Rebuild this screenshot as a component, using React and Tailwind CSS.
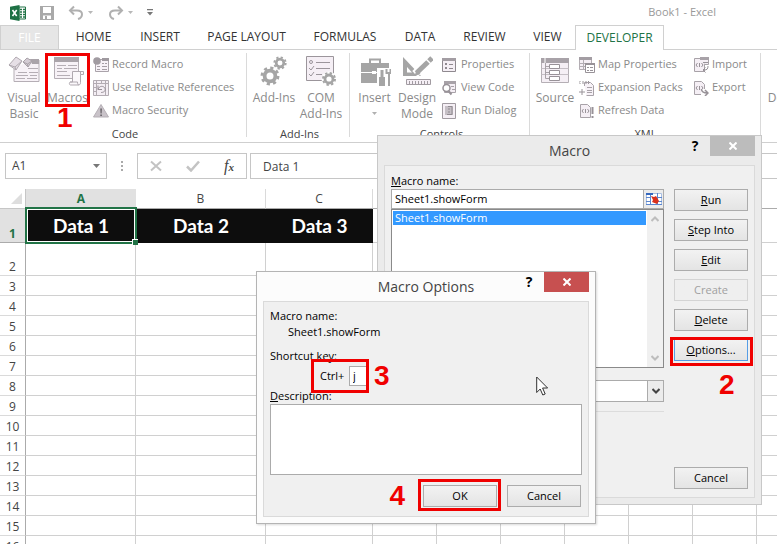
import React from 'react';

/* ---------- icons ---------- */

const ExcelLogo = () => (
  <svg className="h-4 w-4" viewBox="0 0 16 16">
    <path d="M9 2h6.500v12H9z" fill="#fff" stroke="#217346" />
    <path d="M10 4.500h2M13 4.500h2M10 7h2M13 7h2M10 9.500h2M13 9.500h2M10 12h2M13 12h2" stroke="#217346" strokeWidth="1.300" />
    <path d="M0 1.800L9.500 0v16L0 14.200z" fill="#1e7145" />
    <path d="M2.500 5l4.200 6M6.700 5l-4.200 6" stroke="#fff" strokeWidth="1.600" />
  </svg>
);

const SaveIcon = () => (
  <svg className="h-4 w-4" viewBox="0 0 16 16" fill="none">
    <path d="M1 1h14v14H1z" fill="#a9a9a9" />
    <path d="M4 2h8v6H4z" fill="#fff" />
    <path d="M4 10.500h8v3.500H4z" fill="#fff" />
    <path d="M6 11h2v3H6z" fill="#a9a9a9" />
  </svg>
);

const UndoIcon = ({ flip }) => (
  <svg className={flip ? 'h-4 w-4 -scale-x-100' : 'h-4 w-4'} viewBox="0 0 16 16" fill="none" stroke="#b0b0b0" strokeWidth="2">
    <path d="M6 1.500L2 5.500l4 4" />
    <path d="M2.500 5.500H9c7 0 6 7 1 8.500" />
  </svg>
);

const Caret = ({ className = '' }) => (
  <svg className={`h-[3px] w-[5px] ${className}`} viewBox="0 0 5 3" fill="currentColor">
    <path d="M0 0h5L2.500 3z" />
  </svg>
);

const VisualBasicIcon = () => (
  <svg className="h-8 w-8" viewBox="0 0 32 32" fill="none">
    <path d="M6 14v12.500h25V5H22" fill="#f7f2f7" stroke="#b5aeb5" />
    <path d="M22 4h9v5h-7z" fill="#aaa4aa" />
    <path d="M20 13.500h10M10 17.500h9M21 17.500h9M8 20.500h12M22 20.500h7M8 23.500h9M19 23.500h10" stroke="#b5aeb5" />
    <path d="M1 10l7-8 6 4-6 9z" fill="#e6dfe6" stroke="#b0a9b0" />
    <path d="M1 10l6 2 7-6M7 12l1 3" stroke="#b0a9b0" />
    <path d="M15 7l4-4 5 3-4 6z" fill="#d4ccd4" stroke="#a9a2a9" />
    <path d="M15 7l4.500 2L24 6M19.500 9l.5 3" stroke="#a9a2a9" />
  </svg>
);

const MacrosIcon = () => (
  <svg className="h-8 w-8" viewBox="0 0 32 32" fill="none">
    <path d="M2.500 3.500h24v20h-24z" fill="#f7f2f7" stroke="#b5aeb5" />
    <path d="M2 2h25v5H2z" fill="#aaa4aa" />
    <path d="M5 10.500h9M16 10.500h9M5 13.500h5M12 13.500h13M5 16.500h10M5 20.500h13" stroke="#b5aeb5" />
    <path d="M20.500 16.500h11v3h-3v8c0 2-1 2.500-2.500 2.500h-7.500c-1.500 0-1.500-3 0-3h2z" fill="#fbf8fb" stroke="#b0a9b0" />
    <path d="M18 27h7.500c0 2 .5 3 1.500 3M28.500 19.500v-3" stroke="#b0a9b0" />
  </svg>
);

const RecordIcon = () => (
  <svg className="h-4 w-4" viewBox="0 0 16 16" fill="none">
    <path d="M2.500 2.500h13v12h-13z" fill="#f7f2f7" stroke="#aaa3aa" />
    <path d="M9 1h7v3H9z" fill="#9f999f" />
    <path d="M9 6.500h2M12 6.500h2M4 9.500h3M9 9.500h5M4 12.500h3M9 12.500h5" stroke="#a59ea5" />
    <circle cx="4" cy="4" r="3.800" fill="#a19ba1" />
  </svg>
);

const RelativeIcon = () => (
  <svg className="h-4 w-4" viewBox="0 0 16 16" fill="none">
    <path d="M.5.5h15v15H.5zM.5 3.500h15M3.500.5v15M8.500.5v3M12.500.5v3M.5 7.500h3M.5 11.500h3M12.500 3.500v12" fill="#f4eef4" stroke="#b3acb3" />
    <path d="M5 5.500v4h4M5 9.500c1-4 6-4 7-1s-2 4-4 4" stroke="#978f97" />
  </svg>
);

const SecurityIcon = () => (
  <svg className="h-4 w-4" viewBox="0 0 16 16">
    <path d="M8 1.500L15.500 14H.5z" fill="#c9c3c9" stroke="#b5afb5" strokeLinejoin="round" />
    <path d="M7.200 5.500h1.800l-.3 5H7.500zM7.200 11.500H9V13H7.200z" fill="#6f6a6f" />
  </svg>
);

const Gear = ({ cx, cy, r }) => (
  <g fill="none" stroke="#a5a5a5">
    <circle cx={cx} cy={cy} r={r} strokeWidth={r * 0.7} fill="#fff" />
    <circle cx={cx} cy={cy} r={r * 1.5} strokeWidth={r * 0.5} strokeDasharray={`${r * 0.589} ${r * 0.589}`} />
  </g>
);

const GearsIcon = () => (
  <svg className="h-8 w-8" viewBox="0 0 32 32">
    <Gear cx={12} cy={21} r={5.4} />
    <Gear cx={22} cy={8} r={3.8} />
  </svg>
);

const ComIcon = () => (
  <svg className="h-8 w-8" viewBox="0 0 32 32" fill="none">
    <path d="M1.500 1.500h27v24h-27z" fill="#f5eff5" stroke="#9b959b" />
    <circle cx="6" cy="7" r="1.500" stroke="#9b959b" />
    <path d="M4 13l2 2 3-4M4 19l2 2 3-4M11 7.500h14M11 13.500h14M11 19.500h6" stroke="#9b959b" />
    <circle cx="24" cy="24" r="7.500" fill="#fff" />
    <Gear cx={24} cy={24} r={4} />
  </svg>
);

const ToolboxIcon = () => (
  <svg className="h-8 w-8" viewBox="0 0 32 32" fill="none">
    <path d="M11 8V4.500h10V8" stroke="#a5a5a5" strokeWidth="2" />
    <path d="M2 8h28v20H2z" fill="#a5a5a5" />
    <path d="M2 17.500h11M17 17.500h13" stroke="#fff" />
    <path d="M13 16h4v3h-4z" fill="#fff" />
    <path d="M18 13h14v19H18z" fill="#fff" />
    <path d="M20 22h6v9h-6zM21.500 15h3v7h-3z" fill="#a5a5a5" />
    <path d="M30 19v12M27.500 14v4h4v-4" stroke="#a5a5a5" strokeWidth="2" />
  </svg>
);

const DesignIcon = () => (
  <svg className="h-8 w-8" viewBox="0 0 32 32" fill="none">
    <path d="M2 2l18 19H2z" fill="#a5a5a5" />
    <path d="M6 12l5 5.500H6z" fill="#fff" />
    <path d="M31 3L14 19" stroke="#fff" strokeWidth="8" />
    <path d="M27 7L15.500 18" stroke="#a5a5a5" strokeWidth="5" />
    <path d="M31 3l-3 3" stroke="#a5a5a5" strokeWidth="5" />
    <path d="M15.500 15l4 4-6 2z" fill="#a5a5a5" />
    <path d="M5.500 24.500h24v5h-24z" fill="#f5eff5" stroke="#a19ba1" />
    <path d="M8.500 26v3M11.500 26v3M14.500 26v3M17.500 26v3M20.500 26v3M23.500 26v3M26.500 26v3" stroke="#a19ba1" />
  </svg>
);

const PropertiesIcon = () => (
  <svg className="h-4 w-4" viewBox="0 0 16 16" fill="none">
    <path d="M.5 1.500h13v13H.5z" fill="#f5eff5" stroke="#8f898f" />
    <path d="M0 1h14v3H0z" fill="#a39da3" />
    <path d="M3 6h2v2H3zM3 10h2v2H3z" fill="#8f898f" />
    <path d="M7 7.500h4M7 11.500h4" stroke="#8f898f" />
  </svg>
);

const ViewCodeIcon = () => (
  <svg className="h-4 w-4" viewBox="0 0 16 16" fill="none">
    <path d="M2.500 1.500h11v11h-11z" fill="#f5eff5" stroke="#a8a2a8" />
    <path d="M2 1h12v3H2z" fill="#a8a2a8" />
    <path d="M9 6.500h3M10 9.500h3" stroke="#a8a2a8" />
    <circle cx="4.500" cy="8" r="3.500" fill="#fff" stroke="#989298" strokeWidth="1.500" />
    <path d="M6.500 11l3 3.500" stroke="#989298" strokeWidth="2" />
  </svg>
);

const RunDialogIcon = () => (
  <svg className="h-4 w-4" viewBox="0 0 16 16" fill="none">
    <path d="M.5.5h13v15H.5z" fill="#f5eff5" stroke="#a19ba1" />
    <path d="M3 3h8v9H3z" fill="#c5bfc5" />
    <path d="M6 3.500h4v8H5M6 6h2M6 9h2" stroke="#918b91" />
  </svg>
);

const SourceIcon = () => (
  <svg className="h-8 w-8" viewBox="0 0 32 32" fill="none">
    <path d="M2.500 4.500h27v23h-27z" fill="#f5eff5" stroke="#b5afb5" />
    <path d="M2 3h28v5H2z" fill="#a8a2a8" />
    <path d="M6 3v5" stroke="#fff" />
    <path d="M2.500 13.500h27M2.500 19.500h27" stroke="#c5bfc5" />
    <path d="M6.500 8v15.500h4M6.500 11.500h4M6.500 17.500h4" stroke="#a8a2a8" />
    <path d="M10.500 9.500h10v4h-10zM10.500 15.500h10v4h-10zM10.500 21.500h10v4h-10z" fill="#fff" stroke="#989298" />
  </svg>
);

const MapIcon = () => (
  <svg className="h-4 w-4" viewBox="0 0 16 16" fill="none">
    <path d="M.5.5h12v12H.5zM4.500 3v10M.5 6.500h12M.5 9.500h12" fill="#f5eff5" stroke="#b3adb3" />
    <path d="M0 0h13v3H0z" fill="#a39da3" />
    <path d="M6.500 6.500h9v9h-9z" fill="#fff" stroke="#989298" />
    <path d="M6 6h10v2H6z" fill="#989298" />
    <path d="M8 10.500h2M11 10.500h3M8 13.500h2M11 13.500h3" stroke="#989298" />
  </svg>
);

const ExpansionIcon = () => (
  <svg className="h-4 w-4" viewBox="0 0 16 16" fill="none">
    <path d="M5.500 6V2.500h6l3 3v10h-7" fill="#f7f2f7" stroke="#a8a2a8" />
    <path d="M8 7.500h5M8 10.500h5M8 12.500h5" stroke="#a8a2a8" />
    <path d="M1.500 1L0 2.500 1.500 4M4 1v3M7 1v3M9 1l1.500 1.500L9 4M3 9v6M0 12h6" stroke="#989298" />
  </svg>
);

const XmlDoc = ({ children }) => (
  <svg className="h-4 w-4" viewBox="0 0 16 16" fill="none">
    <path d="M1.500 1.500h7l3 3v10h-10z" fill="#f5eff5" stroke="#a8a2a8" />
    <path d="M4.500 6L3 8l1.500 2M8.500 6L10 8l-1.500 2M6.500 6v4" stroke="#989298" />
    {children}
  </svg>
);

const RefreshDataIcon = () => (
  <XmlDoc>
    <path d="M13.500 4v7M13.500 13v2" stroke="#989298" strokeWidth="2" />
  </XmlDoc>
);

const ImportIcon = () => (
  <XmlDoc>
    <path d="M7 .5h8.500v7H12" fill="#f5eff5" stroke="#a8a2a8" />
    <path d="M7 0h9v3H7z" fill="#a8a2a8" />
    <path d="M10 5.500h5M15 9c0 3-1 4-4 4M12.500 10.500L10 13l2.500 2.500" stroke="#989298" />
  </XmlDoc>
);

const ExportIcon = () => (
  <XmlDoc>
    <path d="M8 9h8v7H8z" fill="#fff" />
    <path d="M8.500 9c0 3 2 4 6 4M12 10l3 3-3 3" stroke="#989298" strokeWidth="1.500" />
  </XmlDoc>
);

const DocumentPanelIcon = () => (
  <svg className="h-8 w-8" viewBox="0 0 32 32" fill="none">
    <path d="M10.500 3.500h18v24h-18z" fill="#f5eff5" stroke="#a8a2a8" />
    <path d="M13 8.500h13M13 12.500h13M13 16.500h13" stroke="#a8a2a8" />
  </svg>
);

/* ---------- ribbon ---------- */

const tabs = [
  { name: 'HOME', width: 'w-[67px]' },
  { name: 'INSERT', width: 'w-[66px]' },
  { name: 'PAGE LAYOUT', width: 'w-[107px]' },
  { name: 'FORMULAS', width: 'w-[90px]' },
  { name: 'DATA', width: 'w-[60px]' },
  { name: 'REVIEW', width: 'w-[69px]' },
  { name: 'VIEW', width: 'w-[57px]' },
];

const Step = ({ className, children }) => (
  <span className={`pointer-events-none font-['Liberation_Sans',sans-serif] text-[28px] leading-6 font-bold text-[#f00000] ${className}`}>
    {children}
  </span>
);

const BigButton = ({ icon, label, width, caret }) => (
  <button className={`flex shrink-0 flex-col items-center text-[12px] leading-4 ${width}`}>
    <span className="h-[37px] pt-0.5">{icon}</span>
    <span className="whitespace-pre-line">{label}</span>
    {caret && <Caret className="mt-1.5 text-[#b0b0b0]" />}
  </button>
);

const SmallButton = ({ icon, label }) => (
  <button className="flex h-[23px] items-center gap-[3px] whitespace-nowrap">
    {icon}
    {label}
  </button>
);

const Group = ({ title, width, children }) => (
  <section className={`relative flex shrink-0 flex-col ${width}`}>
    <div className="flex h-[74px] items-start">{children}</div>
    <h2 className="text-center leading-4 text-[#444]">{title}</h2>
  </section>
);

const Divider = () => <div className="h-[84px] w-px shrink-0 bg-[#dadada]" />;

const Ribbon = () => (
  <div className="flex h-[93px] overflow-hidden border-b border-[#cfcfcf] pt-[3px] text-[11px] text-[#8a8a8a]">
    <Group title="Code" width="w-[246px] pl-1">
      <BigButton icon={<VisualBasicIcon />} label={'Visual\nBasic'} width="w-10" />
      <div className="relative ml-px">
        <BigButton icon={<MacrosIcon />} label="Macros" width="w-[45px]" />
        <div className="pointer-events-none absolute -bottom-px inset-x-0 top-0 border-3 border-[#f00000]" />
        <Step className="absolute top-full left-3">1</Step>
      </div>
      <div className="ml-[3px]">
        <SmallButton icon={<RecordIcon />} label="Record Macro" />
        <SmallButton icon={<RelativeIcon />} label="Use Relative References" />
        <SmallButton icon={<SecurityIcon />} label="Macro Security" />
      </div>
    </Group>
    <Divider />
    <Group title="Add-Ins" width="w-[102px] pl-[3px]">
      <BigButton icon={<GearsIcon />} label="Add-Ins" width="w-12" />
      <BigButton icon={<ComIcon />} label={'COM\nAdd-Ins'} width="w-[46px]" />
    </Group>
    <Divider />
    <Group title="Controls" width="w-[179px] pl-1">
      <BigButton icon={<ToolboxIcon />} label="Insert" width="w-[41px]" caret />
      <BigButton icon={<DesignIcon />} label={'Design\nMode'} width="w-11" />
      <div className="ml-[3px]">
        <SmallButton icon={<PropertiesIcon />} label="Properties" />
        <SmallButton icon={<ViewCodeIcon />} label="View Code" />
        <SmallButton icon={<RunDialogIcon />} label="Run Dialog" />
      </div>
    </Group>
    <Divider />
    <Group title="XML" width="w-[230px] pl-px">
      <BigButton icon={<SourceIcon />} label="Source" width="w-12" />
      <div className="w-[114px]">
        <SmallButton icon={<MapIcon />} label="Map Properties" />
        <SmallButton icon={<ExpansionIcon />} label="Expansion Packs" />
        <SmallButton icon={<RefreshDataIcon />} label="Refresh Data" />
      </div>
      <div>
        <SmallButton icon={<ImportIcon />} label="Import" />
        <SmallButton icon={<ExportIcon />} label="Export" />
      </div>
    </Group>
    <Divider />
    <Group title="Modify" width="w-[72px] pl-1">
      <BigButton icon={<DocumentPanelIcon />} label={'Document\nPanel'} width="w-16" />
    </Group>
  </div>
);

/* ---------- sheet ---------- */

const columns = ['D', 'E', 'F', 'G', 'H', 'I', 'J', 'K', 'L', 'M', 'N', 'O', 'P'];
const rows = [2, 3, 4, 5, 6, 7, 8, 9, 10, 11, 12, 13, 14, 15, 16];

const Sheet = () => (
  <div className="overflow-hidden">
    <table className="w-max table-fixed border-separate border-spacing-0 text-[12px] leading-4 text-[#444]">
      <colgroup>
        <col className="w-[26px]" />
        <col className="w-[110px]" />
        <col className="w-[130px]" />
        <col className="w-[107px]" />
        {columns.map((c) => (
          <col key={c} className="w-16" />
        ))}
      </colgroup>
      <thead>
        <tr className="h-5">
          <th className="border-r border-b border-[#c6c6c6] p-0">
            <svg className="mr-[3px] ml-auto h-[11px] w-[11px]" viewBox="0 0 11 11">
              <path d="M11 0v11H0z" fill="#dedede" />
            </svg>
          </th>
          <th className="border-b border-[#ababab] bg-[#e1e1e1] p-0 font-bold text-[#217346]">A</th>
          <th className="border-r border-b border-r-[#dadada] border-b-[#ababab] p-0 font-normal">B</th>
          <th className="border-r border-b border-r-[#dadada] border-b-[#ababab] p-0 font-normal">C</th>
          {columns.map((c) => (
            <th key={c} className="border-r border-b border-r-[#dadada] border-b-[#ababab] p-0 font-normal">
              {c}
            </th>
          ))}
        </tr>
      </thead>
      <tbody>
        <tr className="h-[34px] font-[Lato,sans-serif] text-[19px] font-bold text-white">
          <th className="border-r border-b border-[#ababab] bg-[#e1e1e1] p-0 align-bottom font-['Open_Sans',sans-serif] text-[12px] leading-4 text-[#217346]">
            1
          </th>
          <td className="relative bg-[#0d0d0d] p-0 text-center">
            Data 1
            <div className="absolute -top-0.5 -right-px -bottom-px -left-px border-2 border-[#217346]">
              <div className="h-full border border-white" />
            </div>
            <div className="absolute -right-0.5 -bottom-0.5 h-[6px] w-[6px] border-t border-l border-white bg-[#217346]" />
          </td>
          <td className="bg-[#0d0d0d] p-0 text-center">Data 2</td>
          <td className="bg-[#0d0d0d] p-0 text-center">Data 3</td>
          {columns.map((c) => (
            <td key={c} className="border-r border-b border-[#d0d0d0] p-0" />
          ))}
        </tr>
        {rows.map((n) => (
          <tr key={n} className={n === 2 ? 'h-[33px]' : 'h-5'}>
            <th className="border-r border-b border-r-[#ababab] border-b-[#dadada] p-0 align-bottom font-normal">{n}</th>
            <td className="border-r border-b border-[#d0d0d0] p-0" />
            <td className="border-r border-b border-[#d0d0d0] p-0" />
            <td className="border-r border-b border-[#d0d0d0] p-0" />
            {columns.map((c) => (
              <td key={c} className="border-r border-b border-[#d0d0d0] p-0" />
            ))}
          </tr>
        ))}
      </tbody>
    </table>
  </div>
);

const FormulaBar = () => (
  <div className="flex items-center py-[10px] pl-[5px] text-[12px] text-[#444]">
    <div className="flex h-[26px] w-[102px] items-center border border-[#c6c6c6] pr-1.5">
      <input aria-label="Name box" defaultValue="A1" className="w-full min-w-0 pl-1.5 outline-none" />
      <svg className="h-1 w-[7px] shrink-0" viewBox="0 0 7 4">
        <path d="M0 0h7L3.500 4z" fill="#777" />
      </svg>
    </div>
    <svg className="mx-[14px] h-3 w-0.5" viewBox="0 0 2 12" fill="#aaa">
      <path d="M0 1h2v2H0zM0 5h2v2H0zM0 9h2v2H0z" />
    </svg>
    <div className="flex h-[26px] w-[110px] items-center justify-between border border-[#c6c6c6] px-3">
      <button aria-label="Cancel entry">
        <svg className="h-3 w-3" viewBox="0 0 12 12" stroke="#c3c3c3" strokeWidth="2">
          <path d="M1 1.500l10 9M11 1.500l-10 9" />
        </svg>
      </button>
      <button aria-label="Enter">
        <svg className="h-3 w-[14px]" viewBox="0 0 14 12" fill="none" stroke="#c3c3c3" strokeWidth="2.500">
          <path d="M1 6.500l4 4L13 1.500" />
        </svg>
      </button>
      <button className="font-['Liberation_Serif',serif] text-[16px] leading-5 text-[#444] italic">
        f<b className="text-[11px]">x</b>
      </button>
    </div>
    <input
      aria-label="Formula"
      defaultValue="Data 1"
      className="ml-[3px] h-[26px] min-w-0 flex-1 border border-r-0 border-[#c6c6c6] pl-3 outline-none"
    />
  </div>
);

/* ---------- dialogs ---------- */

const DialogButton = ({ className = 'border-[#acacac]', children, ...props }) => (
  <button
    className={`h-[22px] w-[74px] border bg-linear-to-b from-[#f2f2f2] to-[#e4e4e4] disabled:from-[#efefef] disabled:to-[#efefef] disabled:text-[#a0a0a0] ${className}`}
    {...props}
  >
    {children}
  </button>
);

const DialogTitle = ({ title, closeColor }) => (
  <header className="grid h-[29px] grid-cols-[1fr_auto_1fr]">
    <h2 className="col-start-2 text-sm leading-[30px] text-[#444]">{title}</h2>
    <div className="mr-1.5 flex justify-end">
      <button aria-label="Help" className="h-5 w-[30px] text-[14px] leading-5 font-bold text-black">
        ?
      </button>
      <button aria-label="Close" className={`flex h-5 w-[45px] items-center justify-center ${closeColor}`}>
        <svg className="h-2 w-2" viewBox="0 0 8 8" stroke="#fff" strokeWidth="2">
          <path d="M.5.5l7 7M7.500.5l-7 7" />
        </svg>
      </button>
    </div>
  </header>
);

const Chevron = ({ up, className = '' }) => (
  <svg className={`h-[6px] w-2 ${className}`} viewBox="0 0 8 6" fill="none" stroke="currentColor" strokeWidth="2">
    <path d={up ? 'M.5 5L4 1.500 7.500 5' : 'M.5 1L4 4.500 7.500 1'} />
  </svg>
);

const MacroDialog = () => (
  <div className="absolute top-[135px] left-[377px] flex h-[370px] w-[385px] flex-col border border-[#c8c8c8] bg-[#ebebeb]">
    <DialogTitle title="Macro" closeColor="bg-[#bcbcbc]" />
    <div className="mx-1.5 mb-1.5 grid flex-1 grid-cols-[1fr_74px] gap-x-[10px] border border-[#dadada] bg-[#f0f0f0] px-1.5 pt-[7px] pb-2">
      <div className="flex flex-col">
        <label htmlFor="macro-name" className="leading-4">
          <u>M</u>acro name:
        </label>
        <div className="flex h-5 border border-[#ababab] bg-white">
          <input id="macro-name" defaultValue="Sheet1.showForm" className="min-w-0 flex-1 pl-[3px] outline-none" />
          <button aria-label="Collapse dialog" className="flex w-5 items-center justify-center border-l border-[#ababab] bg-[#ececec]">
            <svg className="h-[14px] w-4" viewBox="0 0 16 14" fill="none">
              <path d="M.5 1.500h15v11H.5z" fill="#fff" stroke="#a9bfe2" />
              <path d="M0 1h7v2H0z" fill="#3567bd" />
              <path d="M0 5.500h5M11 5.500h5M0 9.500h5M12 9.500h4M4.500 3v10M11.500 1v12M0 12.500h16" stroke="#5b86cf" />
              <path d="M5 4l3 1 2-1 3 5-2 3-5-2 1-2z" fill="#d9301c" />
            </svg>
          </button>
        </div>
        <div className="flex h-[159px] justify-between border border-[#8a8a8a] bg-white">
          <ul role="listbox" aria-label="Macros" className="flex-1 p-px">
            <li role="option" aria-selected="true" className="h-[14px] bg-[#3399ff] pl-0.5 leading-[14px] text-white">
              Sheet1.showForm
            </li>
          </ul>
          <div className="flex w-4 flex-col items-center justify-between bg-[#f0f0f0] py-1.5 text-[#bdbdbd]">
            <Chevron up />
            <Chevron />
          </div>
        </div>
        <div className="mt-3 ml-16 flex h-[22px] border border-[#ababab] bg-white">
          <select aria-label="Macros in" className="min-w-0 flex-1 appearance-none pl-1 outline-none">
            <option>All Open Workbooks</option>
          </select>
          <span className="flex w-4 items-center justify-center border-l border-[#ababab] bg-[#ececec] text-[#444]">
            <Chevron />
          </span>
        </div>
        <hr className="mt-[9px] border-[#dcdcdc]" />
      </div>
      <div className="flex flex-col gap-2 pt-4">
        <DialogButton>
          <u>R</u>un
        </DialogButton>
        <DialogButton>
          <u>S</u>tep Into
        </DialogButton>
        <DialogButton>
          <u>E</u>dit
        </DialogButton>
        <DialogButton disabled className="border-[#d4d4d4]">
          Create
        </DialogButton>
        <DialogButton>
          <u>D</u>elete
        </DialogButton>
        <div className="relative flex">
          <DialogButton className="border-[#569de5]">
            <u>O</u>ptions...
          </DialogButton>
          <div className="pointer-events-none absolute -top-0.5 -right-[5px] -bottom-[5px] -left-1 border-3 border-[#f00000]" />
          <Step className="absolute top-[34px] left-[45px]">2</Step>
        </div>
        <div className="mt-auto flex">
          <DialogButton>Cancel</DialogButton>
        </div>
      </div>
    </div>
  </div>
);

const MacroOptionsDialog = () => (
  <div className="absolute top-[271px] left-[256px] flex h-[253px] w-[340px] flex-col border border-[#b4b4b4] bg-[#fcfcfc] shadow-[1px_1px_2px_rgba(0,0,0,0.15)]">
    <DialogTitle title="Macro Options" closeColor="bg-[#c75050]" />
    <div className="mx-1.5 mb-1.5 flex flex-1 flex-col border border-[#dadada] bg-[#f0f0f0] px-1.5 pt-1.5 pb-2 leading-4">
      <p>Macro name:</p>
      <p className="ml-[18px]">Sheet1.showForm</p>
      <label htmlFor="shortcut" className="mt-2">
        Shortcut <u>k</u>ey:
      </label>
      <div className="relative ml-[50px] flex h-6 items-center self-start">
        <span className="w-[29px]">Ctrl+</span>
        <input id="shortcut" defaultValue="j" className="h-5 w-[18px] border border-[#ababab] bg-white pb-0.5 pl-[3px] outline-none" />
        <div className="pointer-events-none absolute -inset-y-[5px] -right-0.5 -left-[9px] border-3 border-[#f00000]" />
        <Step className="absolute left-[54px]">3</Step>
      </div>
      <label htmlFor="description">
        <u>D</u>escription:
      </label>
      <textarea id="description" className="h-[71px] w-full resize-none border border-[#ababab] bg-white outline-none" />
      <div className="mt-auto flex items-center justify-end gap-[10px] pr-px">
        <Step>4</Step>
        <div className="relative flex pl-2">
          <DialogButton>OK</DialogButton>
          <div className="pointer-events-none absolute -top-1.5 -right-1 -bottom-1 left-[3px] border-3 border-[#f00000]" />
        </div>
        <DialogButton>Cancel</DialogButton>
      </div>
    </div>
    <svg className="absolute top-[104px] left-[279px] h-5 w-3" viewBox="0 0 12 20">
      <path d="M.7 1v15.500L4.200 13l2.600 6 2.400-1-2.600-6h5z" fill="#fff" stroke="#333" />
    </svg>
  </div>
);

const App = () => {
  return (
    <div className="relative h-screen overflow-hidden bg-white font-['Open_Sans','Noto_Sans',sans-serif] text-[11px] text-black">
      <header className="flex h-[25px] items-center pl-[10px]">
        <ExcelLogo />
        <button aria-label="Save" className="ml-[13px]">
          <SaveIcon />
        </button>
        <button aria-label="Undo" className="ml-[13px] flex items-center gap-1 text-[#b8b8b8]">
          <UndoIcon />
          <Caret />
        </button>
        <button aria-label="Redo" className="ml-[15px] flex items-center gap-1 text-[#b8b8b8]">
          <UndoIcon flip />
          <Caret />
        </button>
        <button aria-label="Customize toolbar" className="ml-[14px]">
          <svg className="h-[7px] w-[6px]" viewBox="0 0 6 7" fill="#777">
            <path d="M0 0h6v1.200H0zM0 3h6L3 6.500z" />
          </svg>
        </button>
        <h1 className="mr-[61px] ml-auto text-[#999]">Book1 - Excel</h1>
      </header>

      <nav className="flex h-[25px] text-[12px] leading-6 whitespace-nowrap">
        <button className="w-[59px] shrink-0 border border-[#d0d0d0] bg-[#e6e6e6] text-white">FILE</button>
        {tabs.map((tab) => (
          <button key={tab.name} className={`shrink-0 border-b border-[#d0d0d0] pl-0.5 text-[#333] ${tab.width}`}>
            {tab.name}
          </button>
        ))}
        <button className="w-[89px] shrink-0 border border-b-0 border-[#d0d0d0] text-[#217346]">DEVELOPER</button>
        <div className="flex-1 border-b border-[#d0d0d0]" />
      </nav>

      <Ribbon />
      <FormulaBar />
      <Sheet />

      <MacroDialog />
      <MacroOptionsDialog />
    </div>
  );
};

export default App;
